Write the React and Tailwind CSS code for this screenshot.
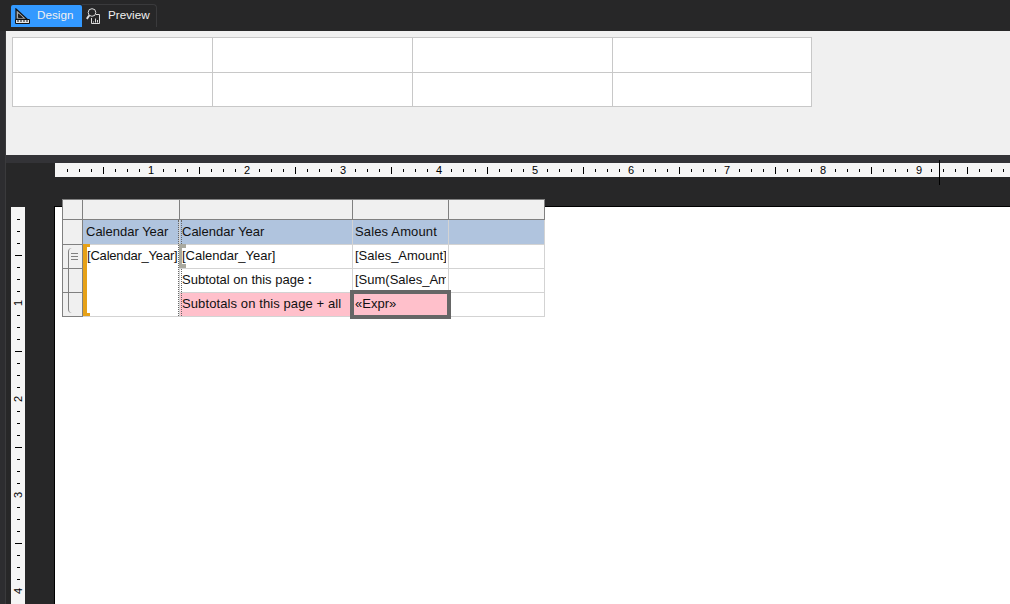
import React from 'react';

const font = { fontFamily: '"Liberation Sans", Arial, sans-serif' };

// ruler cells: one every 1/8 inch (12px), a number on the inch, long tick on the half
const marks = Array.from({ length: 79 }, (_, i) => i + 1);

const HorizontalRuler = () => (
  <div className="flex h-[14px] overflow-hidden bg-[#f5f5f5] pl-[6px] text-[11px] leading-[14px] text-black">
    {marks.map((n) => (
      <div key={n} className="flex h-full w-[12px] shrink-0 items-center justify-center">
        {n % 8 === 0 ? (
          <span>{n / 8}</span>
        ) : n % 4 === 0 ? (
          <div className="h-[7px] w-px bg-black" />
        ) : (
          <div className="h-[3px] w-px bg-black" />
        )}
      </div>
    ))}
  </div>
);

const VerticalRuler = () => (
  <div className="mt-px flex w-[14px] flex-col overflow-hidden bg-[#f5f5f5] pt-[6px] text-[11px] text-black">
    {marks.slice(0, 32).map((n) => (
      <div key={n} className="flex h-[12px] w-full shrink-0 items-center justify-center">
        {n % 8 === 0 ? (
          <span className="-rotate-90 leading-[12px]">{n / 8}</span>
        ) : n % 4 === 0 ? (
          <div className="h-px w-[7px] bg-black" />
        ) : (
          <div className="h-px w-[3px] bg-black" />
        )}
      </div>
    ))}
  </div>
);

const DesignIcon = () => (
  <svg width="15" height="16" viewBox="0 0 15 16" fill="none" stroke="#111" strokeWidth="1.3">
    <path d="M1 1 V11.5 H12.5 Z" fill="#a8a8a8" />
    <path d="M3.5 6 V9.5 H7.5 Z" fill="#222" strokeWidth="0.8" />
    <path d="M0.5 11.5 H14.5 V15.5 H0.5 Z" fill="#e4e4e4" strokeWidth="1" />
    <path d="M3 12v2M6 12v2M9 12v2M12 12v2" strokeWidth="1" />
  </svg>
);

const PreviewIcon = () => (
  <svg width="15" height="16" viewBox="0 0 15 16" fill="none" stroke="#dcdcdc" strokeWidth="1">
    <path d="M10 6.5 H13.5 V15.5 H5.5 V10" />
    <path d="M7.5 14.5v-1M9.5 14.5v-4M11.5 14.5v-2.5" />
    <circle cx="6" cy="4.5" r="3.8" />
    <path d="M3.2 7.5 L0.8 10.8" strokeWidth="2" />
  </svg>
);

const Cell = ({ className = '', children }) => (
  <div className={`overflow-hidden whitespace-nowrap border-r border-b border-[#d3d3d3] pl-[2px] text-[13px] leading-[21px] text-[#111] ${className}`}>
    {children}
  </div>
);

const Handle = ({ className = '' }) => (
  <div className={`border-r border-b border-[#808080] bg-[#f0f0f0] ${className}`} />
);

const DesignTable = () => (
  <div className="relative w-[483px]">
    <div className="grid grid-cols-[20px_97px_173px_96px_96px] grid-rows-[20px_25px_24px_24px_24px] border-t border-l border-[#808080]">
      <Handle />
      <Handle />
      <Handle />
      <Handle />
      <Handle />

      <Handle />
      <Cell className="bg-[#b0c4de] pl-[3px] pt-px">Calendar Year</Cell>
      <Cell className="bg-[#b0c4de] pt-px">Calendar Year</Cell>
      <Cell className="bg-[#b0c4de] pt-px tracking-[0.15px]">Sales Amount</Cell>
      <Cell className="bg-[#b0c4de]" />

      <Handle />
      <Cell className="row-span-3 bg-white pl-[4px] tracking-[-0.2px]">[Calendar_Year]</Cell>
      <Cell className="bg-white">[Calendar_Year]</Cell>
      <Cell className="bg-white">
        <div className="w-[91px] overflow-hidden">[Sales_Amount]</div>
      </Cell>
      <Cell className="bg-white" />

      <Handle />
      <Cell className="bg-white">
        Subtotal on this page <b className="font-bold">:</b>
      </Cell>
      <Cell className="bg-white">
        <div className="w-[91px] overflow-hidden">[Sum(Sales_Amount)]</div>
      </Cell>
      <Cell className="bg-white" />

      <Handle />
      <Cell className="bg-[#ffc0cb] tracking-[0.1px]">Subtotals on this page + all</Cell>
      <Cell className="bg-[#ffc0cb]">«Expr»</Cell>
      <Cell className="bg-white" />
    </div>

    {/* row group bracket + lines */}
    <div className="absolute left-[6px] top-[49px] h-[65px] w-[4px] rounded-l-[4px] border-l border-[#808080]" />
    <div className="absolute left-[9px] top-[54px] flex h-[7px] w-[7px] flex-col justify-between">
      <div className="h-px bg-[#808080]" />
      <div className="h-px bg-[#808080]" />
      <div className="h-px bg-[#808080]" />
    </div>

    {/* orange group indicator */}
    <div className="absolute left-[21px] top-[45px] h-[72px] w-[4px] bg-[#e6a118]" />
    <div className="absolute left-[25px] top-[45px] h-[3px] w-[3px] bg-[#e6a118]" />
    <div className="absolute left-[25px] top-[114px] h-[3px] w-[3px] bg-[#e6a118]" />

    {/* dotted group divider */}
    <div className="absolute left-[116px] top-[21px] h-[96px] border-l border-dotted border-[#666]" />
    <div className="absolute left-[119px] top-[21px] h-[96px] border-l border-dotted border-[#666]" />

    {/* grey detail marker */}
    <div className="absolute left-[117px] top-[45px] h-[24px] w-[3px] bg-[#a9a99f]" />
    <div className="absolute left-[120px] top-[45px] h-[4px] w-[4px] bg-[#a9a99f]" />
    <div className="absolute left-[120px] top-[65px] h-[4px] w-[4px] bg-[#a9a99f]" />

    {/* selected cell */}
    <div className="absolute left-[288px] top-[91px] h-[29px] w-[101px] border-4 border-[#666]" />
  </div>
);

export default function App() {
  return (
    <div style={font} className="relative flex h-[604px] w-[1010px] flex-col overflow-hidden bg-[#272728]">
      {/* tab bar */}
      <div className="flex h-[31px] shrink-0 items-start pl-[11px] pt-[5px] text-[11.7px] text-[#f0f0f0]">
        <div className="flex h-[22px] w-[71px] items-center gap-[7px] rounded-t-[2px] bg-[#3399ff] pl-[4px]">
          <DesignIcon />
          <span className="-mt-[2px]">Design</span>
        </div>
        <div className="-mt-px flex h-[23px] w-[75px] items-center gap-[7px] rounded-tr-[4px] border-t border-r border-[#3a3a3c] pl-[4px]">
          <PreviewIcon />
          <span className="-mt-[2px]">Preview</span>
        </div>
      </div>

      <div className="flex min-h-0 flex-1">
        <div className="w-[6px] shrink-0 border-r border-[#3a3a3c] bg-[#2d2d30]" />
        <div className="flex min-w-0 flex-1 flex-col">
          {/* page header area */}
          <div className="h-[124px] shrink-0 bg-[#f0f0f0] pl-[6px] pt-[6px]">
            <div className="grid w-[800px] grid-cols-[200px_200px_200px_199px] grid-rows-[35px_34px] border-t border-l border-[#c8c8c8] bg-white">
              {Array.from({ length: 8 }, (_, i) => (
                <div key={i} className="border-r border-b border-[#c8c8c8]" />
              ))}
            </div>
          </div>

          <div className="h-[8px] shrink-0 bg-[#333337]" />

          <div className="pl-[49px]">
            <HorizontalRuler />
          </div>

          <div className="h-[29px] shrink-0" />

          <div className="flex min-h-0 flex-1">
            <div className="w-[5px] shrink-0" />
            <VerticalRuler />
            <div className="w-[29px] shrink-0" />
            <div className="flex-1 border-t border-l border-black bg-white" />
          </div>
        </div>
      </div>

      {/* table hangs over the top edge of the canvas */}
      <div className="absolute left-[62px] top-[199px]">
        <DesignTable />
      </div>

      {/* ruler cursor */}
      <div className="absolute left-[939px] top-[160px] h-[25px] w-px bg-black" />
    </div>
  );
}
